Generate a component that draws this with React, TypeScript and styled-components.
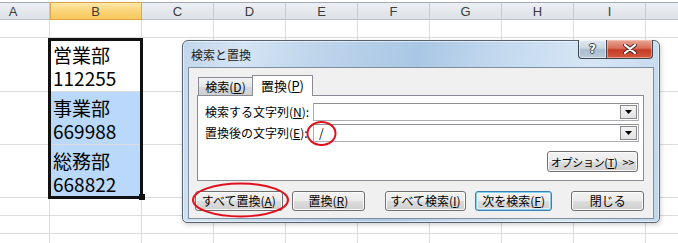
import React from 'react';
import styled, { createGlobalStyle, css } from 'styled-components';

const GlobalStyle = createGlobalStyle`
  html, body { margin: 0; padding: 0; background: #fff; }
  body { overflow: hidden; }
  #root { width: 678px; height: 243px; }
`;

const UI_FONT = `"Noto Sans CJK JP", "Noto Sans", sans-serif`;
const GRID = '#dadcdd';

const Screen = styled.div`
  position: relative;
  width: 678px;
  height: 243px;
  overflow: hidden;
  background: #fff;
  font-family: ${UI_FONT};
`;

const Sheet = styled.div`
  display: grid;
  grid-template-columns: 73px 92px repeat(8, 72px);
  grid-template-rows: 18px 18px 54px 53px 53px 18px 18px 18px;
  margin-left: -23px;
  padding-top: 2px;
`;

const ColHeader = styled.div<{ $sel?: boolean }>`
  box-sizing: border-box;
  border-top: 1px solid #a3abb5;
  border-bottom: 1px solid #b8bfc8;
  border-right: 1px solid #c4cad2;
  background: linear-gradient(#eceff3, #dde2e8);
  color: #3c3c3c;
  font-family: "Liberation Sans", Arial, sans-serif;
  font-size: 13px;
  display: flex;
  align-items: center;
  justify-content: center;
  ${(p) =>
    p.$sel &&
    css`
      background: linear-gradient(#fde7a8, #f9d172 60%, #f6c95e);
      border-top-color: #d9a14a;
      border-bottom-color: #e2a23c;
      border-right-color: #e0a54d;
      box-shadow: inset 1px 0 0 #e0a54d;
    `}
`;

const Cell = styled.div<{ $blue?: boolean }>`
  box-sizing: border-box;
  border-right: 1px solid ${GRID};
  border-bottom: 1px solid ${GRID};
  background: ${(p) => (p.$blue ? '#b9d8fa' : '#fff')};
  display: flex;
  flex-direction: column;
  justify-content: flex-end;
  padding: 0 0 2px 3px;
  font-family: "Noto Sans CJK JP", sans-serif;
  font-size: 19px;
  line-height: 23px;
  color: #000;
  overflow: hidden;
`;

const CellText = styled.div`
  white-space: pre;
`;

const Selection = styled.div`
  position: absolute;
  left: 48px;
  top: 38px;
  width: 95px;
  height: 161px;
  box-sizing: border-box;
  border: 3px solid #111;
  pointer-events: none;
`;

const FillHandle = styled.div`
  position: absolute;
  left: 139px;
  top: 194px;
  width: 6px;
  height: 6px;
  background: #111;
`;

/* ---------- Dialog ---------- */

const Dialog = styled.div`
  position: absolute;
  left: 182px;
  top: 40px;
  width: 478px;
  height: 183px;
  box-sizing: border-box;
  border: 1px solid #56616d;
  border-radius: 6px 6px 5px 5px;
  background: linear-gradient(
    103deg,
    #c2d6eb 0%,
    #d4e4f4 12%,
    #bfd5eb 26%,
    #a9c7e5 46%,
    #c4d9ef 62%,
    #d6e6f5 80%,
    #c0d6ed 100%
  );
  box-shadow: inset 0 0 0 1px rgba(255, 255, 255, 0.55), 1px 2px 5px rgba(0, 0, 0, 0.18);
  display: flex;
  flex-direction: column;
  font-family: ${UI_FONT};
  font-size: 12px;
  color: #000;
`;

const TitleBar = styled.div`
  height: 26px;
  display: flex;
  align-items: flex-start;
  flex-shrink: 0;
`;

const Title = styled.div`
  margin: 7px 0 0 8px;
  font-size: 12px;
  line-height: 14px;
  color: #1b1b1b;
`;

const CaptionButtons = styled.div`
  margin: -1px 6px 0 auto;
  display: flex;
`;

const CaptionButton = styled.div<{ $close?: boolean }>`
  box-sizing: border-box;
  height: 19px;
  width: ${(p) => (p.$close ? '47px' : '28px')};
  border: 1px solid #3e4650;
  border-top: none;
  display: flex;
  align-items: center;
  justify-content: center;
  ${(p) =>
    p.$close
      ? css`
          border-radius: 0 0 4px 0;
          background: linear-gradient(#e8a797 0%, #d9705c 45%, #c63b25 55%, #d45a3f 100%);
          box-shadow: inset 0 0 0 1px rgba(255, 210, 200, 0.5);
        `
      : css`
          border-right: none;
          border-radius: 0 0 0 4px;
          background: linear-gradient(#e2eaf2 0%, #c9d6e3 45%, #a9bccf 55%, #bccbd9 100%);
          box-shadow: inset 0 0 0 1px rgba(255, 255, 255, 0.5);
        `}
`;

const HelpGlyph = styled.span`
  font-family: "DejaVu Sans", sans-serif;
  font-weight: bold;
  font-size: 12px;
  line-height: 12px;
  color: #fff;
  text-shadow: 0 0 1px #333, 1px 0 0 #444, -1px 0 0 #444, 0 1px 0 #444, 0 -1px 0 #444;
`;

const Client = styled.div`
  flex: 1;
  margin: 0 5px 3px 5px;
  border: 1px solid #7f8fa0;
  background: #f0f0f0;
  padding: 7px 9px 0 8px;
  display: flex;
  flex-direction: column;
`;

const Tabs = styled.div`
  display: flex;
  align-items: flex-end;
  height: 21px;
  margin-bottom: -1px;
  position: relative;
  z-index: 1;
`;

const Tab = styled.div<{ $active?: boolean }>`
  box-sizing: border-box;
  border: 1px solid #898c95;
  border-bottom: none;
  display: flex;
  align-items: center;
  justify-content: center;
  font-size: 12px;
  ${(p) =>
    p.$active
      ? css`
          width: 61px;
          height: 21px;
          margin-left: -1px;
          background: #fff;
          font-size: 13px;
          padding-bottom: 1px;
        `
      : css`
          width: 55px;
          height: 18px;
          margin-left: 1px;
          margin-bottom: 1px;
          background: linear-gradient(#f3f3f3, #e6e6e6 50%, #d9d9d9 51%, #d0d0d0);
        `}
`;

const TabPanel = styled.div`
  box-sizing: border-box;
  height: 86px;
  border: 1px solid #898c95;
  background: #fff;
  padding: 7px 4px 0 7px;
  display: flex;
  flex-direction: column;
`;

const Fields = styled.div`
  display: grid;
  grid-template-columns: 108px 326px;
  grid-auto-rows: 18px;
  row-gap: 3px;
  align-items: center;
`;

const Label = styled.div`
  font-size: 12px;
  line-height: 14px;
  white-space: nowrap;
`;

const Combo = styled.div`
  box-sizing: border-box;
  height: 18px;
  border: 1px solid #abadb3;
  border-top-color: #8e8f8f;
  background: #fff;
  display: flex;
  align-items: stretch;
  padding: 1px;
`;

const ComboValue = styled.div`
  flex: 1;
  padding-left: 4px;
  font-size: 12px;
  line-height: 14px;
`;

const ComboArrow = styled.div`
  box-sizing: border-box;
  width: 17px;
  border: 1px solid #8a8a8a;
  background: linear-gradient(#f4f4f4, #e2e2e2);
  display: flex;
  align-items: center;
  justify-content: center;
`;

const OptionRow = styled.div`
  display: flex;
  justify-content: flex-end;
  margin-top: 9px;
  padding-right: 1px;
`;

const Chevrons = styled.span`
  margin-left: 5px;
`;

const Button = styled.div<{ $w: number; $ml?: number; $default?: boolean; $tight?: boolean }>`
  box-sizing: border-box;
  width: ${(p) => p.$w}px;
  margin-left: ${(p) => p.$ml ?? 0}px;
  height: ${(p) => (p.$tight ? 21 : 20)}px;
  border: 1px solid #707070;
  border-radius: 3px;
  background: linear-gradient(#f2f2f2 0%, #ebebeb 50%, #dddddd 51%, #cfcfcf 100%);
  box-shadow: inset 0 0 0 1px rgba(255, 255, 255, 0.85);
  display: flex;
  align-items: center;
  justify-content: center;
  font-size: 12px;
  line-height: 14px;
  white-space: pre;
  ${(p) =>
    p.$tight &&
    css`
      font-size: 11px;
      letter-spacing: -0.3px;
    `}
  ${(p) =>
    p.$default &&
    css`
      border-color: #3c7fb1;
      box-shadow: inset 0 0 0 1px #7fd0f4, inset 0 0 0 2px rgba(255, 255, 255, 0.6);
    `}
`;

const ButtonRow = styled.div`
  display: flex;
  margin: 10px 0 0 -2px;
`;

const Annotations = styled.svg`
  position: absolute;
  left: 0;
  top: 0;
  width: 678px;
  height: 243px;
  pointer-events: none;
`;

const columns = ['A', 'B', 'C', 'D', 'E', 'F', 'G', 'H', 'I', 'J'];
const data: Record<number, { text: string; blue: boolean }> = {
  2: { text: '営業部\n112255', blue: false },
  3: { text: '事業部\n669988', blue: true },
  4: { text: '総務部\n668822', blue: true },
};

const CloseGlyph = () => (
  <svg width="14" height="10" viewBox="0 0 14 10">
    <path d="M2 1 L12 9 M12 1 L2 9" stroke="#4a2a26" strokeWidth="4" strokeLinecap="round" />
    <path d="M2 1 L12 9 M12 1 L2 9" stroke="#fff" strokeWidth="2.2" strokeLinecap="round" />
  </svg>
);

const DownArrow = () => (
  <svg width="7" height="4" viewBox="0 0 7 4">
    <path d="M0 0 H7 L3.5 4 Z" fill="#000" />
  </svg>
);

const buttons = [
  { label: <>すべて置換(<u>A</u>)</>, w: 88, ml: 8 },
  { label: <>置換(<u>R</u>)</>, w: 74, ml: 9 },
  { label: <>すべて検索(<u>I</u>)</>, w: 81, ml: 20 },
  { label: <>次を検索(<u>F</u>)</>, w: 78, ml: 9, def: true },
  { label: <>閉じる</>, w: 73, ml: 19 },
];

export default function App() {
  const rows = [1, 2, 3, 4, 5, 6, 7];
  return (
    <Screen>
      <GlobalStyle />
      <Sheet>
        {columns.map((c) => (
          <ColHeader key={c} $sel={c === 'B'}>
            {c === 'J' ? '' : c}
          </ColHeader>
        ))}
        {rows.map((r) =>
          columns.map((c) => {
            const d = c === 'B' ? data[r] : undefined;
            return (
              <Cell key={`${c}${r}`} $blue={d?.blue}>
                {d && <CellText>{d.text}</CellText>}
              </Cell>
            );
          })
        )}
      </Sheet>
      <Selection />
      <FillHandle />

      <Dialog>
        <TitleBar>
          <Title>検索と置換</Title>
          <CaptionButtons>
            <CaptionButton>
              <HelpGlyph>?</HelpGlyph>
            </CaptionButton>
            <CaptionButton $close>
              <CloseGlyph />
            </CaptionButton>
          </CaptionButtons>
        </TitleBar>
        <Client>
          <Tabs>
            <Tab>
              検索(<u>D</u>)
            </Tab>
            <Tab $active>
              置換(<u>P</u>)
            </Tab>
          </Tabs>
          <TabPanel>
            <Fields>
              <Label>
                検索する文字列(<u>N</u>):
              </Label>
              <Combo>
                <ComboValue />
                <ComboArrow>
                  <DownArrow />
                </ComboArrow>
              </Combo>
              <Label>
                置換後の文字列(<u>E</u>):
              </Label>
              <Combo>
                <ComboValue>/</ComboValue>
                <ComboArrow>
                  <DownArrow />
                </ComboArrow>
              </Combo>
            </Fields>
            <OptionRow>
              <Button $w={91} $tight>
                オプション(<u>T</u>)<Chevrons>{'>>'}</Chevrons>
              </Button>
            </OptionRow>
          </TabPanel>
          <ButtonRow>
            {buttons.map((b, i) => (
              <Button key={i} $w={b.w} $ml={i === 0 ? 0 : b.ml} $default={!!b.def}>
                {b.label}
              </Button>
            ))}
          </ButtonRow>
        </Client>
      </Dialog>

      <Annotations viewBox="0 0 678 243">
        <ellipse cx="321.5" cy="133.5" rx="14" ry="11.5" fill="none" stroke="#e3101b" strokeWidth="2" />
        <ellipse cx="240.5" cy="200" rx="47.5" ry="16.5" fill="none" stroke="#e3101b" strokeWidth="2" />
      </Annotations>
    </Screen>
  );
}
